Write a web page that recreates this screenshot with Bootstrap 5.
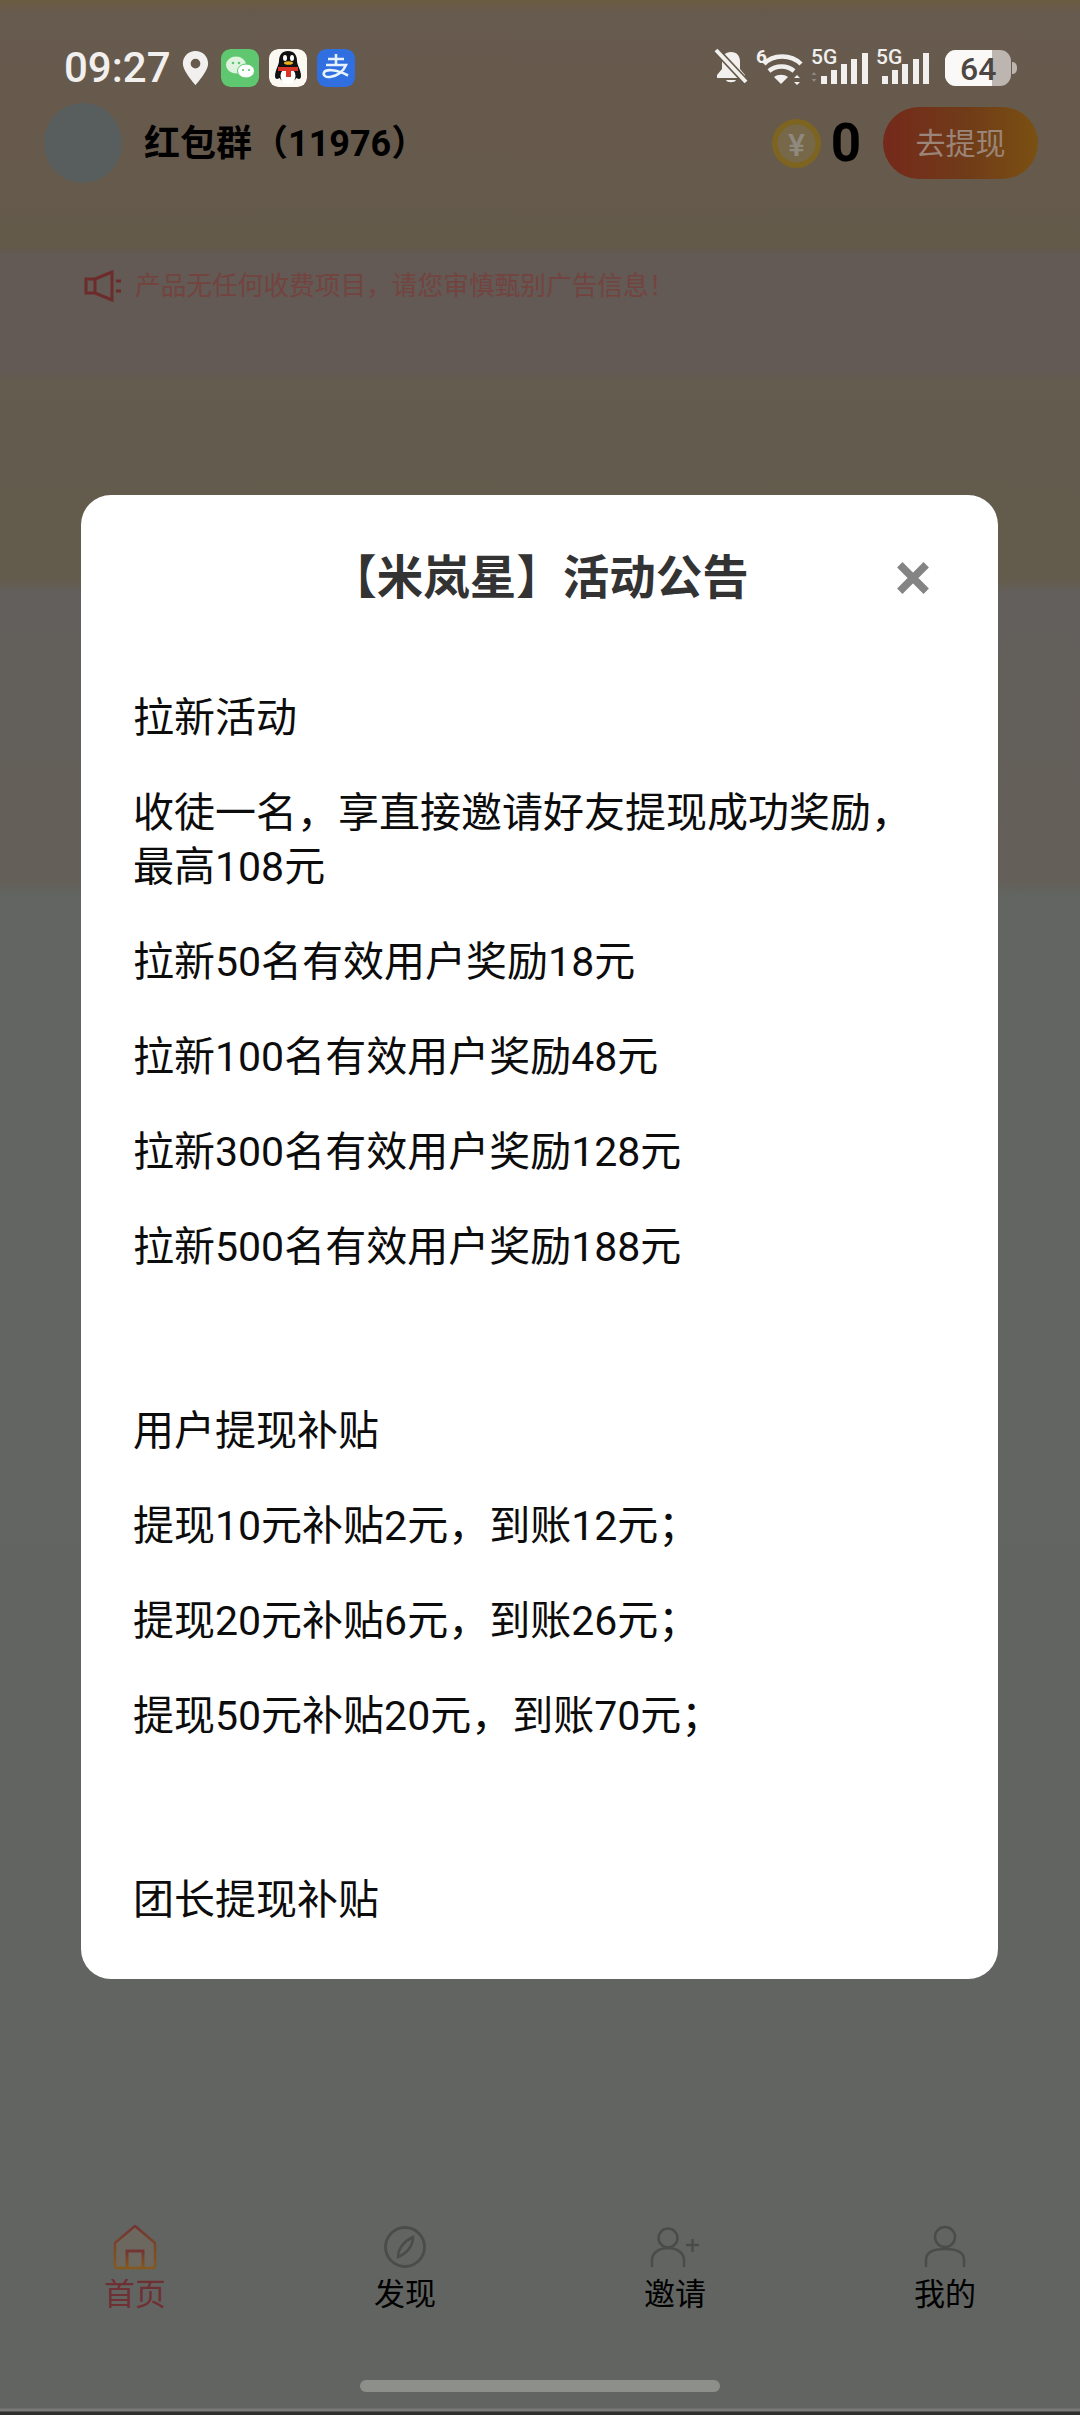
<!DOCTYPE html>
<html lang="zh-CN">
<head>
    <meta charset="UTF-8">
    <meta name="viewport" content="width=device-width, initial-scale=1.0">
    <title>活动公告</title>
    <link rel="stylesheet" href="https://cdn.jsdelivr.net/npm/bootstrap@5.3.0/dist/css/bootstrap.min.css">
    <style>
        html, body { margin: 0; }
        body {
            width: 1080px; height: 2415px; overflow: hidden; color: #000;
            font-family: Roboto, "Noto Sans CJK SC", sans-serif;
        }
        .screen {
            width: 1080px; height: 2415px; position: relative;
            background: linear-gradient(180deg, #6a5c42 0, #675a4e 14px, #665a4c 170px, #635a4a 248px, #635955 254px, #635955 370px, #635c4f 380px, #635c4c 580px, #635f5c 592px, #645f58 880px, #626561 895px, #626461 2408px, #7a7a78 2409px, #7a7a78 2411px, #2f2f2e 2412px);
        }
        .status-row { height: 97px; padding: 49px 63px 0 64px; }
        .clock { font-size: 42px; font-weight: 500; color: #f2f0ee; line-height: 40px; width: 118px; margin-top: -1px; }
        .app-tile { width: 38px; height: 38px; border-radius: 9px; display: block; }
        .tile-gap { margin-left: 10px; }
        .pin-icon { margin: 2px 12px 0 0; }
        .status-svg { display: block; margin-top: -8px; }
        .top-row { height: 92px; padding: 0 42px 0 44px; }
        .avatar-dot { width: 78px; height: 80px; border-radius: 50%; background: #585e5e; }
        .group-name { font-size: 36px; font-weight: 700; margin: 2px 0 0 22px; line-height: 46px; }
        .coin-num { font-size: 53px; font-weight: 700; line-height: 53px; width: 40px; margin: 0 17px 0 5px; text-align: center; }
        .withdraw-pill {
            width: 155px; height: 72px; border-radius: 36px; font-size: 30px; color: #9a8578;
            background: linear-gradient(90deg, #75291b, #703c18 55%, #7a5012);
        }
        .notice-line { padding: 77px 0 0 84px; color: #73443f; font-size: 25.7px; line-height: 40px; }
        .notice-line svg { margin-right: 13px; }
        .tab-bar { position: absolute; left: 0; right: 0; top: 2224px; }
        .tab-item { width: 270px; line-height: 40px; font-size: 31px; }
        .tab-item svg { display: block; margin: 0 auto 5px; }
        .tab-active { color: #6f3034; }
        .home-pill { position: absolute; left: 360px; top: 2380px; width: 360px; height: 12px; border-radius: 6px; background: #8d8f8b; }
        .notice-modal { position: absolute; left: 81px; top: 495px; width: 917px; height: 1484px; border-radius: 30px; overflow: hidden; border: 0; }
        .modal-head { height: 166px; padding: 0 52px; position: relative; }
        .modal-head h1 { font-size: 46.500px; font-weight: 700; color: #333; margin: 0; line-height: 166px; text-align: center; }
        .close-x { position: absolute; left: 815px; top: 66px; }
        .modal-text { padding: 30px 52px 0; }
        .modal-text p { font-size: 41px; line-height: 54px; margin: 0 0 41px; color: #0c0c0c; }
        .modal-text p.gap-line { height: 48px; margin-bottom: 41px; }
    </style>
</head>
<body>
<div class="screen">
    <!-- status bar -->
    <div class="status-row d-flex align-items-start">
        <span class="clock">09:27</span>
        <svg class="pin-icon" width="27" height="34" viewBox="0 0 26 35"><path fill="#f2f0ee" fill-rule="evenodd" d="M13 0C5.800 0 0 5.600 0 12.800 0 21 13 35 13 35S26 21 26 12.800C26 5.600 20.200 0 13 0Zm0 8a5 5 0 1 1 0 10 5 5 0 0 1 0-10Z"/></svg>
        <svg class="app-tile" viewBox="0 0 38 38"><rect width="38" height="38" rx="9" fill="#5fc76f"/><ellipse cx="15" cy="16" rx="10" ry="8.500" fill="#dff3df"/><ellipse cx="25" cy="22" rx="8.500" ry="7" fill="#fff" stroke="#5fc76f"/><circle cx="12" cy="14" r="1.300" fill="#5fc76f"/><circle cx="18" cy="14" r="1.300" fill="#5fc76f"/><circle cx="22" cy="21" r="1.100" fill="#5fc76f"/><circle cx="28" cy="21" r="1.100" fill="#5fc76f"/></svg>
        <svg class="app-tile tile-gap" viewBox="0 0 38 38"><rect width="38" height="38" rx="9" fill="#fbf8f2"/><path d="M19 2c6 0 9 4 9 10 0 4 4 9 4 15 0 4-3 3-5 2-1 5-15 5-16 0-2 1-5 2-5-2 0-6 4-11 4-15 0-6 3-10 9-10Z" fill="#111"/><ellipse cx="19" cy="27" rx="7.500" ry="8" fill="#fff"/><ellipse cx="16" cy="9" rx="2" ry="3" fill="#fff"/><ellipse cx="23" cy="9" rx="2" ry="3" fill="#fff"/><ellipse cx="19.500" cy="14" rx="4.500" ry="1.800" fill="#eab11f"/><path d="M9 18h20v4h-7v6h-5v-6H9Z" fill="#d8342a"/></svg>
        <svg class="app-tile tile-gap" viewBox="0 0 38 38"><rect width="38" height="38" rx="9" fill="#2f6fe0"/><path d="M11 10h16M19 5v11M9 16h20c-3 7-9 11-16 12-5 .5-7-2-6-4.500 1.500-3.500 12-3.500 24 3" fill="none" stroke="#e8f1ff" stroke-width="2.600"/></svg>
        <div class="d-flex align-items-start ms-auto">
            <svg class="status-svg" width="34" height="44" viewBox="0 -8 34 44"><path fill="#f2f0ee" d="M17 3c6 0 9 4 9 10v7l5 6v3H3v-3l5-6v-7c0-6 3-10 9-10Zm-5 28h10c-1 3-9 3-10 0Z"/><path d="M2 1l30 32" stroke="#655a49" stroke-width="7"/><path d="M2 1l30 32" stroke="#f2f0ee" stroke-width="4"/></svg>
            <svg class="status-svg ms-2" width="47" height="44" viewBox="0 -8 47 44"><text x="0" y="14" font-size="19" font-weight="700" fill="#f2f0ee" font-family="Roboto">6</text><path d="M8 15C17 5 35 5 45 15M13 22c7-6 18-6 25 0" fill="none" stroke="#f2f0ee" stroke-width="4.500"/><path d="M18 28c4-3 10-3 14 0l-7 7Z" fill="#f2f0ee"/><path d="M41 26l3 3h-6ZM41 36l3-3h-6Z" fill="#f2f0ee"/></svg>
            <svg class="status-svg ms-2" width="57" height="44" viewBox="0 -8 57 44"><text x="0" y="15" font-size="21" font-weight="500" fill="#f2f0ee" font-family="Roboto">5G</text><path d="M3 23l2.500 3h-5ZM3 33l2.500-3h-5Z" fill="#8d8880"/><g fill="#f2f0ee"><rect x="10" y="27" width="6" height="8"/><rect x="20" y="21" width="6" height="14"/><rect x="30" y="15" width="6" height="20"/><rect x="40" y="10" width="6" height="25"/><rect x="51" y="4" width="6" height="31"/></g></svg>
            <svg class="status-svg ms-2" width="53" height="44" viewBox="0 -8 53 44"><text x="0" y="15" font-size="21" font-weight="500" fill="#f2f0ee" font-family="Roboto">5G</text><g fill="#f2f0ee"><rect x="6" y="27" width="6" height="8"/><rect x="16" y="21" width="6" height="14"/><rect x="26" y="15" width="6" height="20"/><rect x="37" y="10" width="6" height="25"/><rect x="47" y="4" width="6" height="31"/></g></svg>
            <svg class="status-svg ms-3" width="72" height="50" viewBox="0 -8 72 50"><rect y="1" width="66" height="36" rx="11" fill="#bdb5b0"/><path d="M11 1h36v36H11A11 11 0 0 1 0 26V12A11 11 0 0 1 11 1Z" fill="#fbf9f7"/><path d="M67 13c3 0 5 2 5 6s-2 6-5 6Z" fill="#bdb5b0"/><text x="15" y="31" font-size="32" font-weight="500" fill="#4c4744" font-family="Roboto">64</text></svg>
        </div>
    </div>

    <!-- group header -->
    <div class="top-row d-flex align-items-center">
        <div class="avatar-dot"></div>
        <div class="group-name">红包群（11976）</div>
        <svg width="49" height="49" viewBox="0 0 49 49" class="ms-auto"><circle cx="24.500" cy="24.500" r="24.500" fill="#7d6420"/><circle cx="24.500" cy="24.500" r="19" fill="#77684a"/><text x="24.500" y="37" font-size="32" font-weight="500" fill="#8f8a80" text-anchor="middle" font-family="Roboto">¥</text></svg>
        <div class="coin-num">0</div>
        <div class="withdraw-pill d-flex align-items-center justify-content-center">去提现</div>
    </div>

    <!-- notice line -->
    <div class="notice-line d-flex align-items-center">
        <svg width="38" height="32" viewBox="0 0 38 32"><path d="M2 9h9v14H2ZM11 9l17-7v28l-17-7" fill="none" stroke="#6c2c2b" stroke-width="3"/><path d="M32 11h5M32 21h5" stroke="#6c2c2b" stroke-width="3"/></svg>
        <span>产品无任何收费项目，请您审慎甄别广告信息！</span>
    </div>

    <!-- bottom tabs -->
    <div class="tab-bar d-flex text-center">
        <div class="tab-item tab-active">
            <svg width="44" height="46" viewBox="0 0 44 46"><defs><linearGradient id="homeStroke" x1="0" y1="0" x2="0" y2="1"><stop offset="0" stop-color="#733432"/><stop offset="1" stop-color="#85591d"/></linearGradient></defs><path d="M22 2 2 19v22q0 3 3 3h34q3 0 3-3V19Z" fill="#6c6860" stroke="url(#homeStroke)" stroke-width="2.500" stroke-linejoin="round"/><path d="M14 44V27h16v17" fill="none" stroke="url(#homeStroke)" stroke-width="3"/></svg>
            首页
        </div>
        <div class="tab-item">
            <svg width="42" height="46" viewBox="0 0 42 46"><circle cx="21" cy="23" r="19.500" fill="none" stroke="#4a4c49" stroke-width="2.800"/><path d="M29 13c0 8-5 16-15 20 0-8 6-16 15-20Z" fill="none" stroke="#4a4c49" stroke-width="2.500"/></svg>
            发现
        </div>
        <div class="tab-item">
            <svg width="50" height="46" viewBox="0 0 50 46"><circle cx="18" cy="14" r="9.500" fill="none" stroke="#4a4c49" stroke-width="2.500"/><path d="M2 43V36c0-7 7-12 16-12s16 5 16 12v7M36 21h13M42.500 15v13" fill="none" stroke="#4a4c49" stroke-width="2.500"/></svg>
            邀请
        </div>
        <div class="tab-item">
            <svg width="42" height="46" viewBox="0 0 42 46"><circle cx="21" cy="13" r="10" fill="none" stroke="#4a4c49" stroke-width="2.500"/><path d="M2 43V36c0-8 8-11 19-11s19 3 19 11v7" fill="none" stroke="#4a4c49" stroke-width="2.500"/></svg>
            我的
        </div>
    </div>
    <div class="home-pill"></div>

    <!-- announcement popup -->
    <div class="notice-modal modal-content bg-white">
        <div class="modal-head">
            <h1>【米岚星】活动公告</h1>
            <svg class="close-x" width="34" height="34" viewBox="0 0 36 36"><path d="M4 4l28 28M32 4 4 32" stroke="#848484" stroke-width="8"/></svg>
        </div>
        <div class="modal-text">
            <p>拉新活动</p>
            <p>收徒一名，享直接邀请好友提现成功奖励，最高108元</p>
            <p>拉新50名有效用户奖励18元</p>
            <p>拉新100名有效用户奖励48元</p>
            <p>拉新300名有效用户奖励128元</p>
            <p>拉新500名有效用户奖励188元</p>
            <p class="gap-line"></p>
            <p>用户提现补贴</p>
            <p>提现10元补贴2元，到账12元；</p>
            <p>提现20元补贴6元，到账26元；</p>
            <p>提现50元补贴20元，到账70元；</p>
            <p class="gap-line"></p>
            <p>团长提现补贴</p>
        </div>
    </div>
</div>
<script src="https://cdn.jsdelivr.net/npm/bootstrap@5.3.0/dist/js/bootstrap.bundle.min.js"></script>
</body>
</html>
